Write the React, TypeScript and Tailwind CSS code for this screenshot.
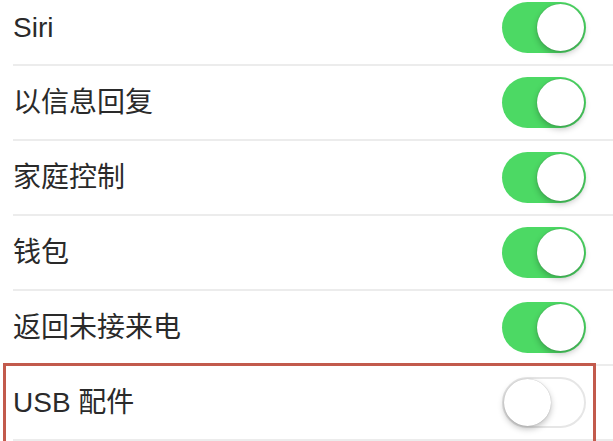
import { clsx } from 'clsx'

const rows = [
  { label: 'Siri', on: true },
  { label: '以信息回复', on: true },
  { label: '家庭控制', on: true },
  { label: '钱包', on: true },
  { label: '返回未接来电', on: true },
  { label: 'USB 配件', on: false, marked: true },
]

function Toggle({ on }: { on: boolean }) {
  return (
    <div
      className={clsx(
        'relative h-[51px] w-[84px] rounded-full',
        on ? 'bg-[#4cd964]' : 'border-2 border-[#e6e6e6] bg-white',
      )}
    >
      <div
        className={clsx(
          'absolute h-[47px] w-[47px] rounded-full bg-white shadow-[0_3px_6px_rgba(0,0,0,0.25),0_0_1px_rgba(0,0,0,0.3)]',
          on ? 'right-[2px] top-[2px]' : 'left-[0px] top-[0px]',
        )}
      />
    </div>
  )
}

export default function App() {
  return (
    <div
      className="h-[441px] w-[613px] overflow-hidden bg-white text-[#2a2a2a]"
      style={{ fontFamily: '"Liberation Sans", "Noto Sans CJK SC", sans-serif' }}
    >
      <div className="-mt-[9px]">
        {rows.map((row) => (
          <div key={row.label} className="relative pl-[13px]">
            <div className="flex h-[75px] items-center justify-between border-b-2 border-[#ececec] pr-[27px]">
              <span className="text-[28px] leading-none">{row.label}</span>
              <Toggle on={row.on} />
            </div>
            {row.marked && (
              <span className="absolute left-[3px] top-[-3px] h-[90px] w-[593px] border-[3px] border-[#c25a4c]" />
            )}
          </div>
        ))}
      </div>
    </div>
  )
}
